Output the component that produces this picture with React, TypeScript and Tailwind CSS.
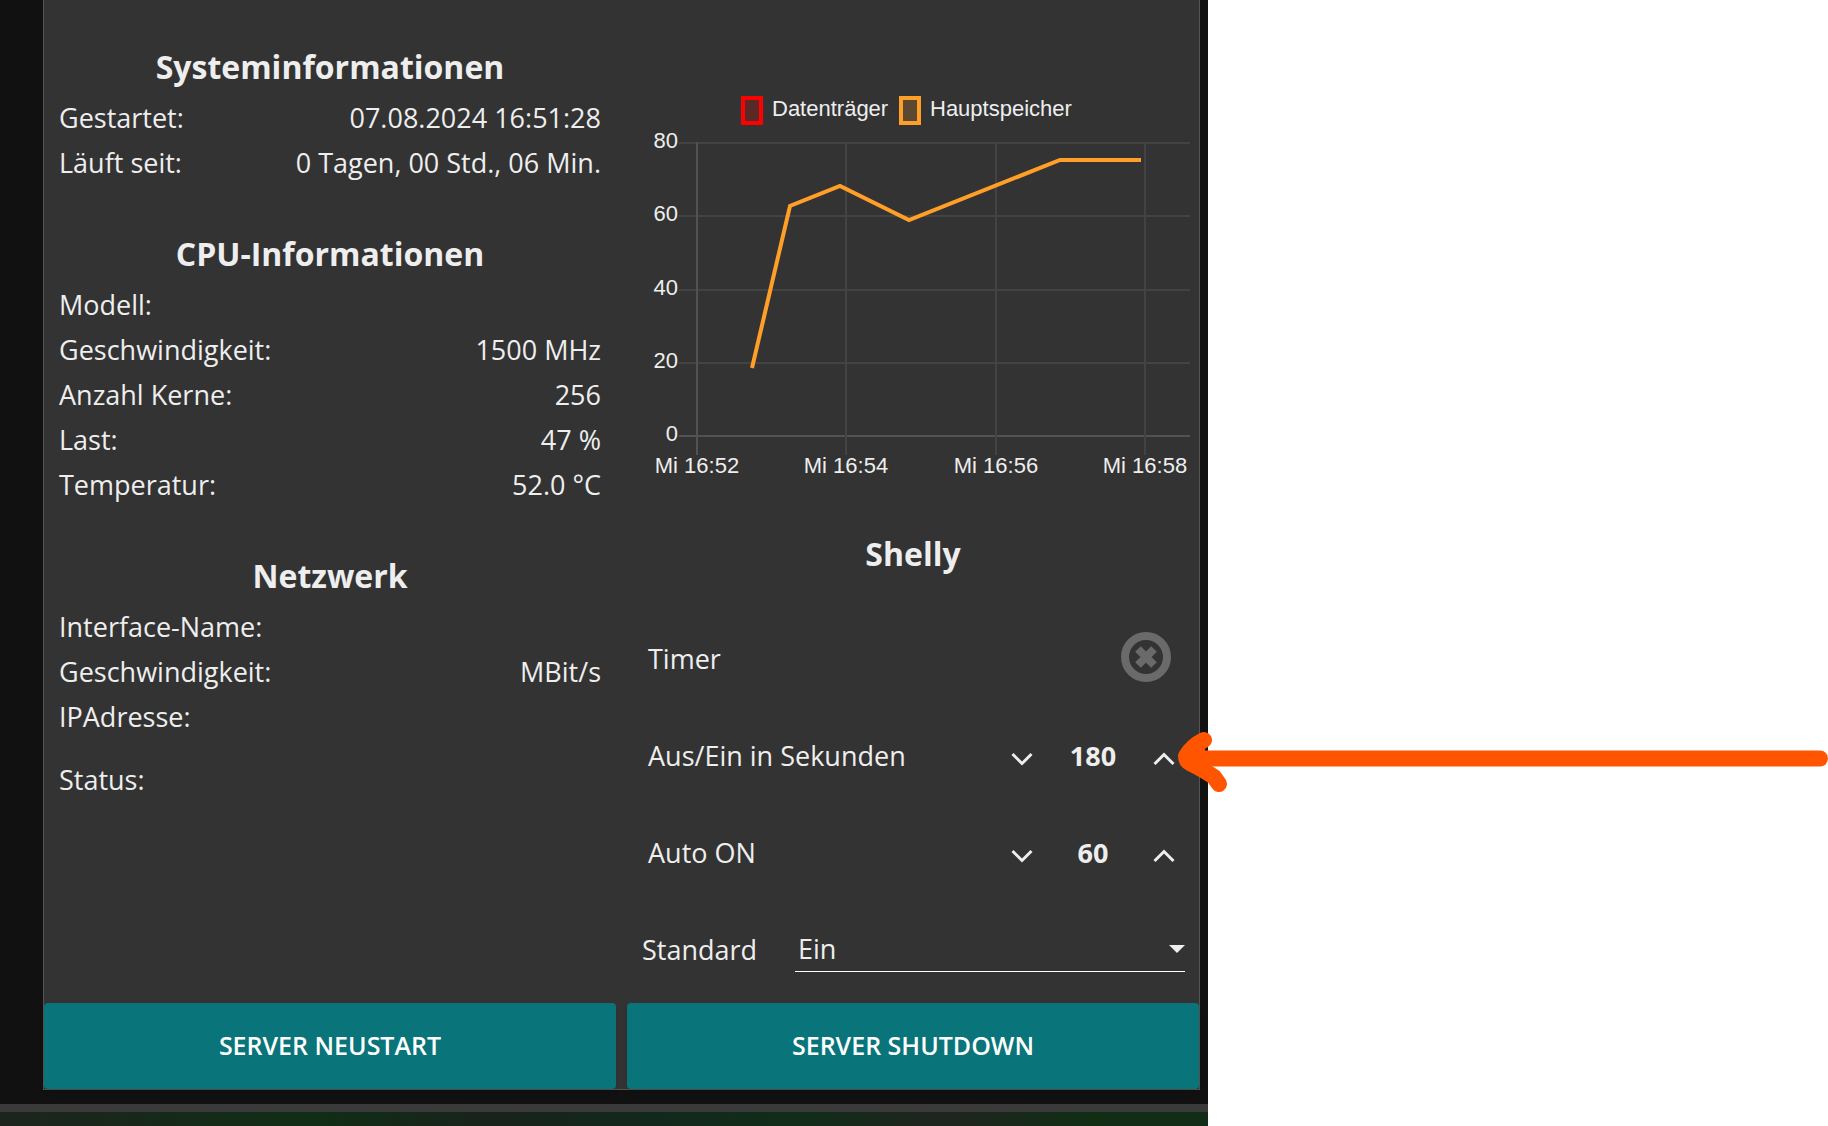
import React, { useState } from 'react';

interface InfoRow {
  label: string;
  value?: string;
  spaced?: boolean;
}

interface InfoSectionProps {
  title: string;
  rows: InfoRow[];
}

const systemRows: InfoRow[] = [
  { label: 'Gestartet:', value: '07.08.2024 16:51:28' },
  { label: 'Läuft seit:', value: '0 Tagen, 00 Std., 06 Min.' },
];

const cpuRows: InfoRow[] = [
  { label: 'Modell:' },
  { label: 'Geschwindigkeit:', value: '1500 MHz' },
  { label: 'Anzahl Kerne:', value: '256' },
  { label: 'Last:', value: '47 %' },
  { label: 'Temperatur:', value: '52.0 °C' },
];

const networkRows: InfoRow[] = [
  { label: 'Interface-Name:' },
  { label: 'Geschwindigkeit:', value: 'MBit/s' },
  { label: 'IPAdresse:' },
  { label: 'Status:', spaced: true },
];

const InfoSection: React.FC<InfoSectionProps> = ({ title, rows }) => (
  <section>
    <h2 className="mb-[6px] text-center text-[32px] leading-[45px] font-bold">{title}</h2>
    <dl>
      {rows.map((row) => (
        <div key={row.label} className={`flex justify-between ${row.spaced ? 'mt-[18px]' : ''}`}>
          <dt>{row.label}</dt>
          <dd>{row.value}</dd>
        </div>
      ))}
    </dl>
  </section>
);

const yTicks = [
  { y: 63, label: '80' },
  { y: 136, label: '60' },
  { y: 210, label: '40' },
  { y: 283, label: '20' },
  { y: 356, label: '0' },
];

const xTicks = [
  { x: 70, label: 'Mi 16:52' },
  { x: 219, label: 'Mi 16:54' },
  { x: 369, label: 'Mi 16:56' },
  { x: 518, label: 'Mi 16:58' },
];

const UsageChart: React.FC = () => (
  <svg
    viewBox="0 0 572 410"
    role="img"
    aria-label="Datenträger und Hauptspeicher"
    className="block w-full font-['Liberation_Sans',Arial,sans-serif] text-[22px]"
    fill="#eeeeee"
  >
    <rect x="116" y="18" width="18" height="25" fill="#ff0000" fillOpacity="0.2" stroke="#ff0000" strokeWidth="4" />
    <text x="145" y="36">Datenträger</text>
    <rect x="274" y="18" width="18" height="25" fill="#ff9f27" fillOpacity="0.2" stroke="#ff9f27" strokeWidth="4" />
    <text x="303" y="36">Hauptspeicher</text>

    {yTicks.map((tick) => (
      <g key={tick.label}>
        <line x1="52" x2="563" y1={tick.y} y2={tick.y} stroke={tick.label === '0' ? '#525252' : '#434343'} strokeWidth="2" />
        <text x="51" y={tick.y + 5} textAnchor="end">{tick.label}</text>
      </g>
    ))}
    {xTicks.map((tick, i) => (
      <g key={tick.label}>
        <line x1={tick.x} x2={tick.x} y1="62" y2="375" stroke={i === 0 ? '#525252' : '#434343'} strokeWidth="2" />
        <text x={tick.x} y="393" textAnchor="middle">{tick.label}</text>
      </g>
    ))}

    <polyline
      points="125,288 163,126 213,106 282,140 433,80 514,80"
      fill="none"
      stroke="#ff9f27"
      strokeWidth="4"
    />
  </svg>
);

interface NumberControlProps {
  label: string;
  value: number;
  onChange: (value: number) => void;
}

const NumberControl: React.FC<NumberControlProps> = ({ label, value, onChange }) => (
  <div className="flex h-[97px] items-center pr-[11px] pl-[21px]">
    <span className="flex-1">{label}</span>
    <button
      type="button"
      aria-label={`${label} verringern`}
      onClick={() => onChange(value - 1)}
      className="flex h-12 w-12 items-center justify-center pt-[6px]"
    >
      <svg width="22" height="14" viewBox="0 0 22 14" fill="none" stroke="#eeeeee" strokeWidth="3">
        <path d="M1.5 2 L11 11.5 L20.5 2" />
      </svg>
    </button>
    <output className="w-[94px] text-center font-bold">{value}</output>
    <button
      type="button"
      aria-label={`${label} erhöhen`}
      onClick={() => onChange(value + 1)}
      className="flex h-12 w-12 items-center justify-center pt-[6px]"
    >
      <svg width="22" height="14" viewBox="0 0 22 14" fill="none" stroke="#eeeeee" strokeWidth="3">
        <path d="M1.5 12 L11 2.5 L20.5 12" />
      </svg>
    </button>
  </div>
);

const ShellyPanel: React.FC = () => {
  const [timer, setTimer] = useState(false);
  const [seconds, setSeconds] = useState(180);
  const [autoOn, setAutoOn] = useState(60);
  const [mode, setMode] = useState('Ein');

  return (
    <section>
      <h2 className="mb-[34px] text-center text-[32px] leading-[45px] font-bold">Shelly</h2>

      <div className="flex h-[97px] items-center justify-between pr-[28px] pl-[21px]">
        <span>Timer</span>
        <button type="button" aria-label="Timer" aria-pressed={timer} onClick={() => setTimer(!timer)} className="pb-1">
          <svg width="50" height="50" viewBox="0 0 50 50" fill="none" stroke={timer ? '#097479' : '#6a6a6a'}>
            <circle cx="25" cy="25" r="21" strokeWidth="8" />
            <path d="M17 17 L33 33 M33 17 L17 33" strokeWidth="8" />
          </svg>
        </button>
      </div>

      <NumberControl label="Aus/Ein in Sekunden" value={seconds} onChange={setSeconds} />
      <NumberControl label="Auto ON" value={autoOn} onChange={setAutoOn} />

      <div className="flex h-[97px] items-center pr-[14px] pl-[15px]">
        <label htmlFor="standard" className="w-[153px]">Standard</label>
        <div className="relative flex-1">
          <select
            id="standard"
            value={mode}
            onChange={(e) => setMode(e.target.value)}
            className="block h-[45px] w-full appearance-none border-b border-white bg-transparent pl-[3px] leading-[44px]"
          >
            <option value="Ein">Ein</option>
            <option value="Aus">Aus</option>
          </select>
          <svg width="16" height="8" viewBox="0 0 16 8" fill="#eeeeee" className="pointer-events-none absolute top-[18px] right-0">
            <path d="M0 0 H16 L8 8 Z" />
          </svg>
        </div>
      </div>
    </section>
  );
};

const ActionButton: React.FC<{ children: string }> = ({ children }) => (
  <button
    type="button"
    className="h-[86px] rounded-[4px] bg-[#097479] pb-[2px] text-[25px] font-semibold text-white uppercase shadow-md"
  >
    {children}
  </button>
);

const Arrow: React.FC = () => (
  <svg
    width="654"
    height="70"
    viewBox="0 0 654 70"
    fill="none"
    stroke="#ff5500"
    strokeWidth="16"
    strokeLinecap="round"
    strokeLinejoin="round"
    className="pointer-events-none absolute top-[724px] left-[1174px]"
  >
    <path d="M646 34.5 H22" />
    <path d="M30 16 Q18 22 12 32 Q12 37 16 39 Q32 47 40 53 L45 60" />
    <path d="M30 23 L34 34 L30 42 L14 36 Z" fill="#ff5500" stroke="none" />
  </svg>
);

const App: React.FC = () => {
  return (
    <div className="relative bg-white font-['Open_Sans','Noto_Sans',sans-serif] text-[27px] leading-[45px] text-[#eeeeee]">
      <main className="w-full max-w-[1208px] bg-[#111111]">
        <div className="pr-2 pb-[14px] pl-[43px]">
          <div className="border-x border-b border-[#555555] bg-[#333333]">
            <div className="grid grid-cols-2 gap-x-[11px] pb-[5px]">
              <div className="flex flex-col gap-[46px] px-[15px] pt-[44px]">
                <InfoSection title="Systeminformationen" rows={systemRows} />
                <InfoSection title="CPU-Informationen" rows={cpuRows} />
                <InfoSection title="Netzwerk" rows={networkRows} />
              </div>
              <div className="flex flex-col gap-[41px] pt-[80px]">
                <UsageChart />
                <ShellyPanel />
              </div>
            </div>
            <div className="grid grid-cols-2 gap-x-[11px]">
              <ActionButton>Server Neustart</ActionButton>
              <ActionButton>Server Shutdown</ActionButton>
            </div>
          </div>
        </div>
        <div className="h-2 bg-[#3a3a3a]" />
        <div className="h-[14px] bg-[linear-gradient(to_right,#1c241d,#102d15_26%,#18231b_40%,#13271d_52%,#102c18_66%,#1f241f_78%,#112d14_90%,#112d17)]" />
      </main>
      <Arrow />
    </div>
  );
};

export default App;
